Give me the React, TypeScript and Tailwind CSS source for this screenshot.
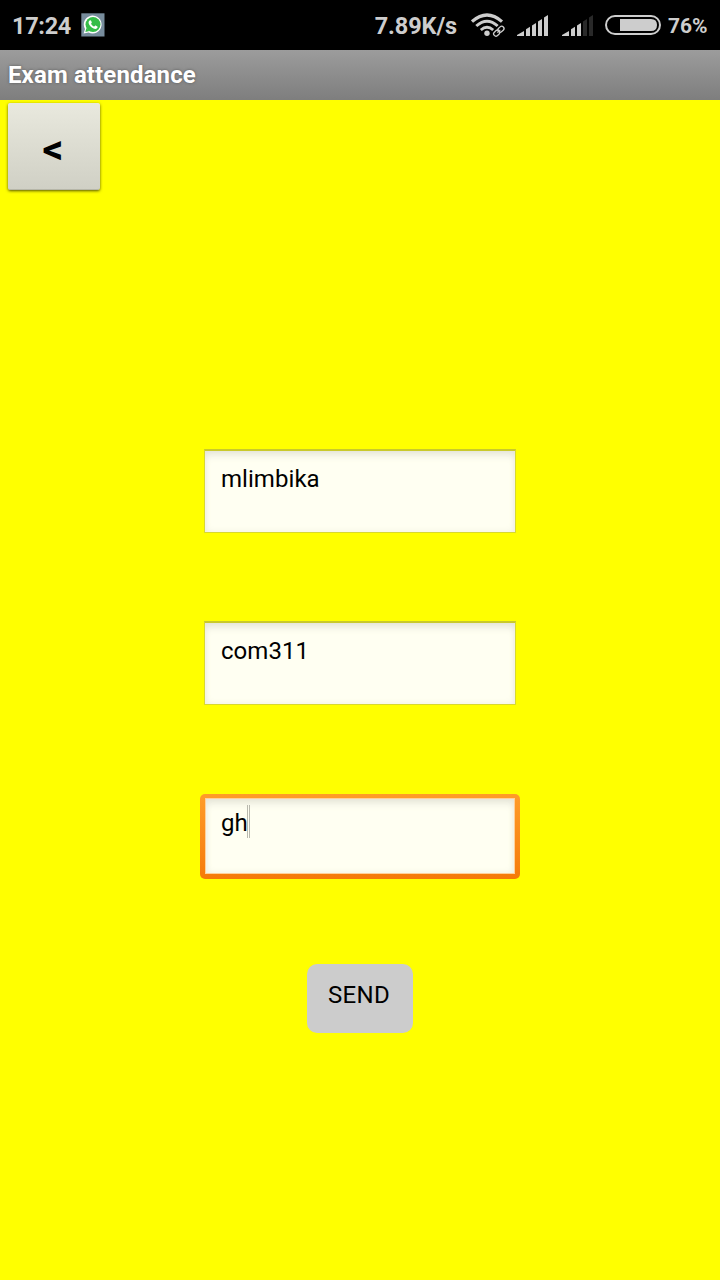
import React from "react";

function WhatsAppIcon() {
  return (
    <svg className="ml-[10px] block h-6 w-6" viewBox="0 0 24 24">
      <rect x="0.3" y="0.3" width="23.2" height="23.2" fill="#778c9c" />
      <path d="M2.6 20.6 4 16A8.9 8.9 0 1 1 7.6 19.4Z" fill="#fff" />
      <circle cx="12" cy="11.5" r="7.5" fill="#35bd48" />
      <path d="M4.4 18.9 5.4 15 8.6 18Z" fill="#35bd48" />
      <path
        d="M8.6 7.6c.6-.6 1.2-.5 1.5.1l.7 1.6c.2.5-.5 1-.7 1.4.7 1.4 1.7 2.3 3.1 2.9.5-.3.9-1.2 1.4-1l1.7.9c.6.3.3 1.3-.3 1.8-1.3 1.1-3.3.6-5.2-.8-2-1.5-3.6-3.8-3.2-5.4.1-.6.5-1.1 1-1.5Z"
        fill="#fff"
      />
    </svg>
  );
}

function WifiIcon() {
  return (
    <svg className="ml-[14px] block h-6 w-[35px]" viewBox="0 0 35 24" fill="none" stroke="#cdcdcd">
      <path d="M1 8.6Q16-4.6 31 8.6" strokeWidth="3.2" />
      <path d="M5.3 13Q16 3.4 26.7 13" strokeWidth="3" />
      <path d="M9.8 17Q16 11.4 22.2 17" strokeWidth="2.8" />
      <circle cx="16" cy="20.3" r="2.7" fill="#cdcdcd" stroke="none" />
      <g transform="rotate(-43 27.8 18.2)">
        <rect x="21.2" y="15.4" width="13.2" height="5.6" rx="2.8" fill="#000" stroke="#000" strokeWidth="2.4" />
        <rect x="21.6" y="15.9" width="6.6" height="4.6" rx="2.3" strokeWidth="1.3" />
        <rect x="27.4" y="15.9" width="6.6" height="4.6" rx="2.3" strokeWidth="1.3" />
        <path d="M25.8 18.2h4" strokeWidth="1.2" />
      </g>
    </svg>
  );
}

function SignalIcon({ level }: { level: number }) {
  const bars = [
    "M0 21V20L7 16V21Z",
    "M9 21V14.2L13 11.8V21Z",
    "M15 21V10.4L19 8V21Z",
    "M21 21V6.4L25 4V21Z",
    "M27 21V2.4L31 0V21Z",
  ];
  return (
    <svg className="block h-[21px] w-[31px]" viewBox="0 0 31 21">
      {bars.map((d, i) => (
        <path key={d} d={d} fill={i < level ? "#cdcdcd" : "#292929"} />
      ))}
    </svg>
  );
}

function BatteryIcon() {
  return (
    <svg className="ml-3 block h-5 w-14" viewBox="0 0 56 20">
      <rect x="1" y="1" width="54" height="18" rx="9" fill="none" stroke="#cdcdcd" strokeWidth="2" />
      <path d="M15 4H46Q52 4 52 10T46 16H15Z" fill="#cdcdcd" />
    </svg>
  );
}

function Field({ value, focused = false }: { value: string; focused?: boolean }) {
  return (
    <div
      className={
        focused
          ? "mt-px h-[85px] w-80 rounded-[5px] bg-linear-to-b from-[#ff9c28] to-[#f57a08] p-[5px] pt-1"
          : "h-21 w-80 px-1"
      }
    >
      <div
        className={
          focused
            ? "flex h-[76px] border border-[#ffd09a] bg-[#fffff2] pl-[15px] pt-2 shadow-[inset_0_6px_10px_-3px_#e2e2d5,inset_0_0_7px_#f0f0e2]"
            : "flex h-21 border border-t-2 border-[#d8d830] border-t-[#c9c92b] bg-[#fffff2] pl-4 pt-[12px] shadow-[inset_0_6px_10px_-3px_#e2e2d5,inset_0_0_7px_#f0f0e2]"
        }
      >
        <span className="h-8 text-[24px] leading-8 tracking-[0.05px] text-black">{value}</span>
        {focused && <span className="-ml-px mt-[-2px] h-[33px] w-[3px] border-x border-[#b9b9ae]" />}
      </div>
    </div>
  );
}

export default function App() {
  return (
    <div className="flex h-[1280px] w-[720px] flex-col overflow-hidden bg-[#ffff00] font-['Roboto',sans-serif]">
      <header className="flex h-[50px] shrink-0 items-center bg-black pl-3 pr-3 text-[#cdcdcd]">
        <span className="mt-[2px] w-[59px] whitespace-nowrap text-[23.5px] leading-8 font-bold tracking-[-0.3px]">17:24</span>
        <WhatsAppIcon />
        <span className="mt-[2px] ml-auto whitespace-nowrap text-[23.5px] leading-8 font-bold tracking-[-0.1px]">7.89K/s</span>
        <WifiIcon />
        <span className="ml-[11px] mt-px"><SignalIcon level={5} /></span>
        <span className="ml-[14px] mt-px"><SignalIcon level={3} /></span>
        <BatteryIcon />
        <span className="mt-[2px] ml-[7px] w-10 whitespace-nowrap text-[21px] leading-8 font-bold">76%</span>
      </header>

      <div className="flex h-[50px] shrink-0 items-center bg-linear-to-b from-[#9c9c9c] to-[#7e7e7e] pl-2">
        <h1 className="text-[24px] leading-8 font-bold tracking-[0.12px] text-white [text-shadow:0_0_3px_#555]">Exam attendance</h1>
      </div>

      <main className="flex flex-1 flex-col items-center">
        <button className="mt-[3px] ml-2 flex h-[87px] w-[92px] shrink-0 items-center justify-center self-start rounded-[2px] border-b border-[#b6b6a8] bg-linear-to-b from-[#e9e9de] to-[#d0d0c5] pr-[2px] pt-2 text-[41px] font-bold text-black shadow-[0_1px_3px_#555500]">
          &lt;
        </button>
        <div className="mt-[259px] flex flex-col gap-[88px]">
          <Field value="mlimbika" />
          <Field value="com311" />
          <Field value="gh" focused />
        </div>
        <button className="mt-[85px] flex h-[69px] w-[106px] shrink-0 items-start justify-center rounded-[10px] bg-[#cccccc] pt-[15px] pr-[2px] text-[24px] leading-8 tracking-[0.3px] text-black">
          SEND
        </button>
      </main>
    </div>
  );
}
